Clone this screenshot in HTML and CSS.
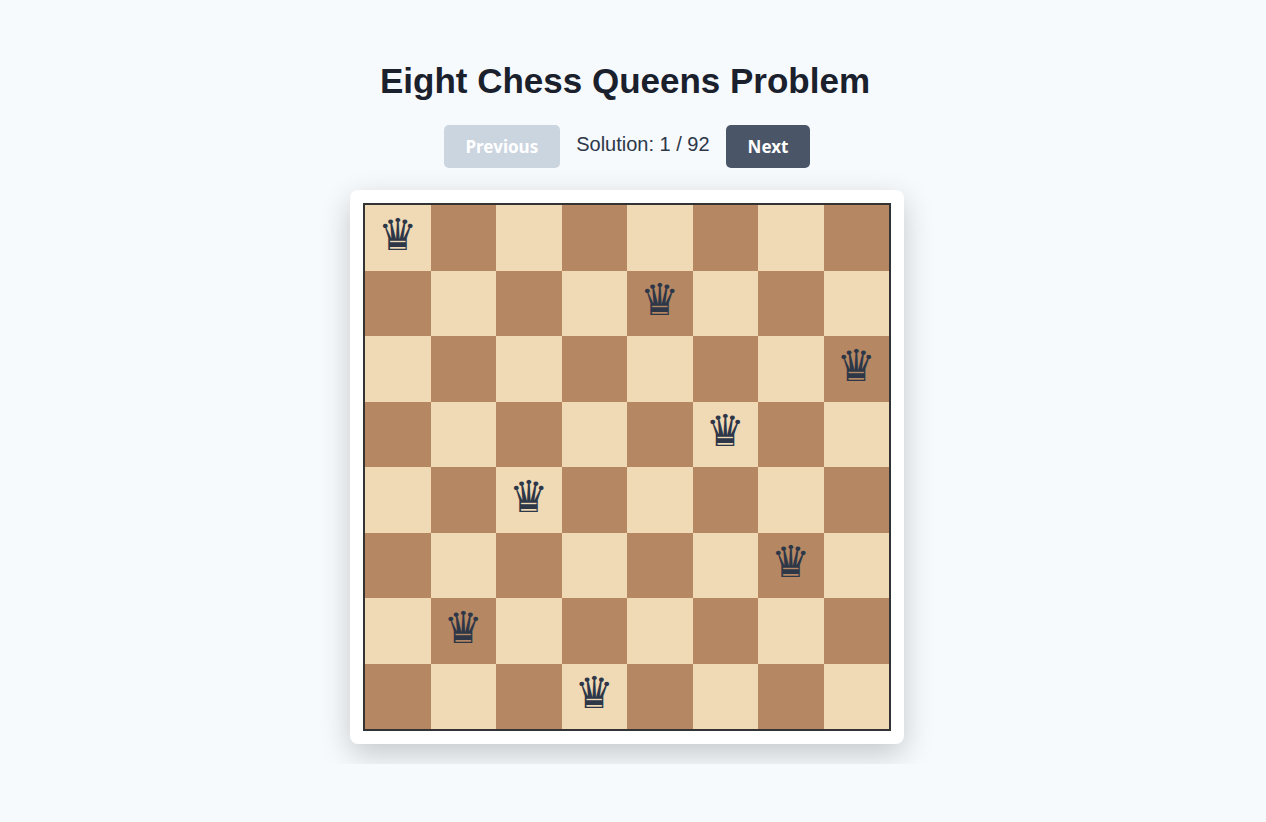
FILE: index.html
```html
<!DOCTYPE html>
<html lang="en">
<head>
  <meta charset="UTF-8" />
  <meta name="viewport" content="width=device-width, initial-scale=1.0" />
  <title>Eight Chess Queens Problem</title>
  <link rel="stylesheet" href="styles.css">
</head>
<body>
  <div class="container">
    <h1>Eight Chess Queens Problem</h1>

    <div class="controls">
      <button type="button" id="prevBtn" disabled>Previous</button>
      <span class="solution-info" id="solutionInfo">Solution: 1 / 92</span>
      <button type="button" id="nextBtn">Next</button>
    </div>

    <div class="board-wrapper">
      <div class="board" id="board"></div>
    </div>
  </div>

  <script src="script.js"></script>
</body>
</html>
```

FILE: styles.css
```css
* {
  box-sizing: border-box;
}
body {
  margin: 0;
  min-height: 100vh;
  background-color: #f6fafd;
  color: #2d3748;
  font-family: "Liberation Sans", Arial, sans-serif;
}
.container {
  display: flex;
  flex-direction: column;
  align-items: center;
  padding: 60px 32px 20px 20px;
  overflow: hidden;
}
h1 {
  margin: 0 4px 24px 0;
  font-size: 35px;
  line-height: 41px;
  color: #1a202c;
  text-align: center;
}
.controls {
  display: flex;
  align-items: center;
  gap: 16px;
  margin-bottom: 22px;
}
button {
  height: 43px;
  padding: 0 22px;
  border: none;
  border-radius: 5px;
  background-color: #4a5568;
  color: white;
  font-family: "Noto Sans", sans-serif;
  font-size: 17px;
  font-weight: bold;
  cursor: pointer;
}
button:disabled {
  background-color: #cbd5e0;
  cursor: not-allowed;
}
.solution-info {
  padding-bottom: 4px;
  font-size: 20px;
}
.board-wrapper {
  width: 100%;
  max-width: 554px;
  padding: 13px;
  border-radius: 8px;
  background-color: white;
  box-shadow: 0 10px 30px rgba(0, 0, 0, 0.2);
}
.board {
  display: grid;
  grid-template-columns: repeat(8, 1fr);
  grid-template-rows: repeat(8, 1fr);
  aspect-ratio: 1;
  border: 2px solid #333;
}
.cell {
  display: flex;
  align-items: center;
  justify-content: center;
  min-width: 0;
  min-height: 0;
  padding-bottom: 6px;
  font-family: "DejaVu Sans", sans-serif;
  font-size: 44px;
  line-height: 1;
}
.light {
  background-color: #f0d9b5;
}
.dark {
  background-color: #b58863;
}
```

FILE: script.js
```javascript
const SIZE = 8;
const solutions = [];
let current = 0;

const board = document.getElementById('board');
const info = document.getElementById('solutionInfo');
const prevBtn = document.getElementById('prevBtn');
const nextBtn = document.getElementById('nextBtn');

function isSafe(queens, col) {
  const row = queens.length;
  return queens.every((c, r) => c !== col && Math.abs(c - col) !== row - r);
}

function solve(queens) {
  if (queens.length === SIZE) {
    solutions.push(queens);
    return;
  }
  for (let col = 0; col < SIZE; col++) {
    if (isSafe(queens, col)) solve([...queens, col]);
  }
}

function render() {
  board.innerHTML = '';
  for (let row = 0; row < SIZE; row++) {
    for (let col = 0; col < SIZE; col++) {
      const cell = document.createElement('div');
      cell.className = 'cell ' + ((row + col) % 2 === 0 ? 'light' : 'dark');
      if (solutions[current][row] === col) cell.textContent = '♛';
      board.appendChild(cell);
    }
  }
  info.textContent = `Solution: ${current + 1} / ${solutions.length}`;
  prevBtn.disabled = current === 0;
  nextBtn.disabled = current === solutions.length - 1;
}

prevBtn.onclick = () => { current--; render(); };
nextBtn.onclick = () => { current++; render(); };

solve([]);
render();
```
